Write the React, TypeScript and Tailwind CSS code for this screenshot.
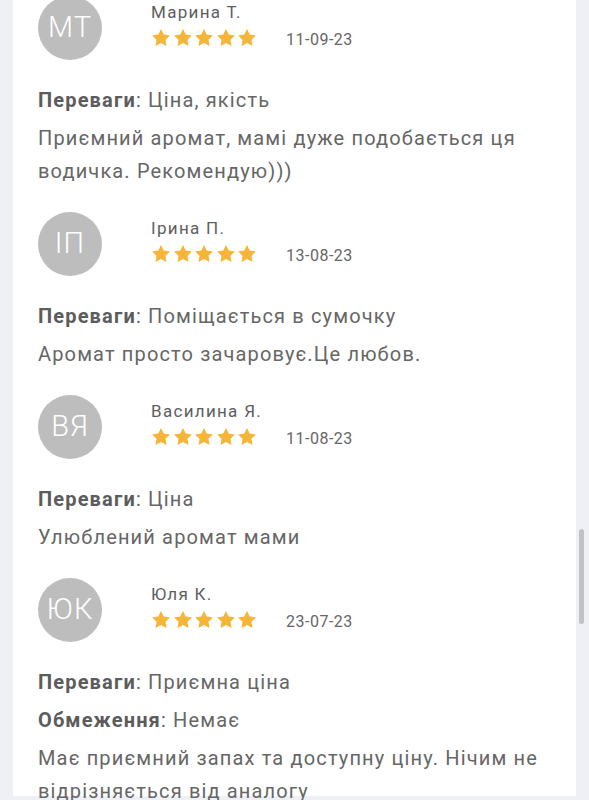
import React from "react";

type Review = {
  initials: string;
  name: string;
  date: string;
  pros: string;
  cons?: string;
  body: string;
};

const reviews: Review[] = [
  {
    initials: "МТ",
    name: "Марина Т.",
    date: "11-09-23",
    pros: "Ціна, якість",
    body: "Приємний аромат, мамі дуже подобається ця водичка. Рекомендую)))",
  },
  {
    initials: "ІП",
    name: "Ірина П.",
    date: "13-08-23",
    pros: "Поміщається в сумочку",
    body: "Аромат просто зачаровує.Це любов.",
  },
  {
    initials: "ВЯ",
    name: "Василина Я.",
    date: "11-08-23",
    pros: "Ціна",
    body: "Улюблений аромат мами",
  },
  {
    initials: "ЮК",
    name: "Юля К.",
    date: "23-07-23",
    pros: "Приємна ціна",
    cons: "Немає",
    body: "Має приємний запах та доступну ціну. Нічим не відрізняється від аналогу",
  },
];

function Star() {
  return (
    <svg width="18" height="17" viewBox="2 2 20 19" className="shrink-0">
      <path
        d="M12 2l3.09 6.26L22 9.27l-5 4.87 1.18 6.88L12 17.77l-6.18 3.25L7 14.14 2 9.27l6.91-1.01L12 2z"
        fill="#f5b538"
      />
    </svg>
  );
}

function ReviewItem({ r }: { r: Review }) {
  return (
    <div className="pb-[24px]">
      <div className="flex items-start">
        <div className="w-[64px] h-[64px] rounded-full bg-[#bdbdbd] flex items-center justify-center text-white text-[29px] font-light tracking-[1px] shrink-0">
          {r.initials}
        </div>
        <div className="ml-[49px] pt-[6px]">
          <div className="text-[17px] leading-[20px] text-[#5e5e5e] tracking-[1.3px]">{r.name}</div>
          <div className="flex items-center mt-[7px] h-[17px]">
            <div className="flex gap-[3.5px] ml-[1px]">
              <Star />
              <Star />
              <Star />
              <Star />
              <Star />
            </div>
            <div className="ml-[30px] text-[16px] leading-[20px] text-[#666] tracking-[0.5px] mt-[4px]">
              {r.date}
            </div>
          </div>
        </div>
      </div>
      <div className="mt-[24px] text-[20px] leading-[33px] text-[#666] tracking-[1.15px]">
        <p>
          <span className="font-bold text-[#5c5c5c]">Переваги</span>: {r.pros}
        </p>
        {r.cons && (
          <p className="mt-[5px]">
            <span className="font-bold text-[#5c5c5c]">Обмеження</span>: {r.cons}
          </p>
        )}
        <p className="mt-[5px]">{r.body}</p>
      </div>
    </div>
  );
}

export default function App() {
  return (
    <div
      className="relative w-[589px] h-[800px] overflow-hidden bg-[#eef0f5]"
      style={{ fontFamily: "Roboto, 'Noto Sans', sans-serif" }}
    >
      <div className="ml-[13px] w-[563px] h-full bg-white">
        <div className="-mt-[4px] pl-[25px] pr-[20px]">
          {reviews.map((r) => (
            <ReviewItem key={r.name} r={r} />
          ))}
        </div>
      </div>
      <div className="absolute left-[579px] top-[529px] w-[5px] h-[95px] rounded-full bg-[#c2c2c2]" />
    </div>
  );
}
